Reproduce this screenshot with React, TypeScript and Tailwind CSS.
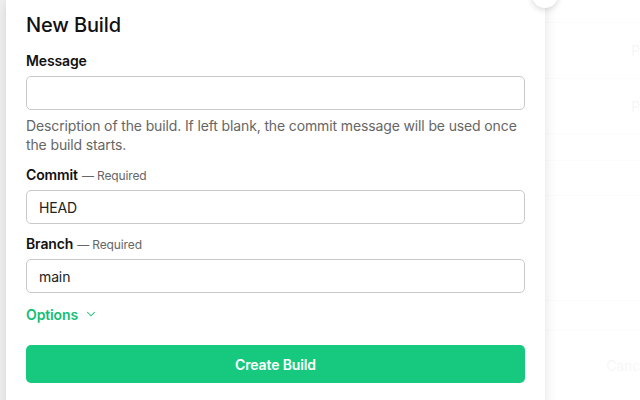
import { ChevronDown } from 'lucide-react';

const rows = [
  { h: 'h-[56px]', label: 'P' },
  { h: 'h-[55px]', label: 'P' },
  { h: 'h-[27px]', label: '' },
  { h: 'h-[35px]', label: '' },
  { h: 'h-[105px]', label: '' },
  { h: 'h-[30px]', label: '' },
  { h: 'h-[70px]', label: 'Canc' },
];

function Field({ label, required, value }: { label: string; required?: boolean; value?: string }) {
  return (
    <div className="flex flex-col">
      <div className="flex items-baseline gap-1 h-[22px]">
        <span className="text-[14px] font-semibold text-[#111]">{label}</span>
        {required && <span className="text-[12px] text-[#666]">— Required</span>}
      </div>
      <div className="mt-[4px] h-[34px] w-full rounded-[5px] border border-[#c9c9c9] bg-white px-[12px] flex items-center text-[14px] text-[#222]">
        {value}
      </div>
    </div>
  );
}

export default function App() {
  return (
    <div className="relative w-[640px] h-[400px] overflow-hidden bg-white font-['Inter',sans-serif] tracking-[-0.13px]">
      {/* faded page behind the dialog */}
      <div className="flex flex-col pt-[22px] opacity-30">
        {rows.map((r, i) => (
          <div key={i} className={`${r.h} border-t border-[#e2e2e2] flex items-center justify-end pr-0 text-[14px] text-[#999]`}>
            {r.label}
          </div>
        ))}
      </div>
      <div className="absolute inset-0 bg-white/70" />
      <div className="absolute left-0 top-0 w-[6px] h-full bg-[#f1f1f1]" />

      {/* close button peeking in at the top */}
      <div className="absolute left-[532px] top-[-18px] w-[26px] h-[26px] rounded-full bg-white shadow-[0_2px_6px_rgba(0,0,0,0.15)] z-20" />

      {/* dialog */}
      <div className="absolute left-[6px] top-0 w-[539px] h-[420px] bg-white shadow-[0_0_12px_rgba(0,0,0,0.12)] z-10 px-[20px] pt-[11px]">
        <h1 className="text-[20px] font-medium text-[#111] leading-[28px]">New Build</h1>
        <div className="mt-[11px] flex flex-col">
          <Field label="Message" />
          <p className="mt-[6px] text-[14px] leading-[19px] text-[#666]">
            Description of the build. If left blank, the commit message will be used once the build starts.
          </p>
          <div className="mt-[10px]">
            <Field label="Commit" required value="HEAD" />
          </div>
          <div className="mt-[9px]">
            <Field label="Branch" required value="main" />
          </div>
          <button className="mt-[10px] flex items-center gap-[6px] h-[22px] text-[14px] font-semibold text-[#14be74] self-start">
            Options
            <ChevronDown className="w-[14px] h-[14px]" strokeWidth={1.75} />
          </button>
          <button className="mt-[20px] h-[38px] w-full rounded-[5px] bg-[#17c97e] text-white text-[14px] font-semibold">
            Create Build
          </button>
        </div>
      </div>
    </div>
  );
}
